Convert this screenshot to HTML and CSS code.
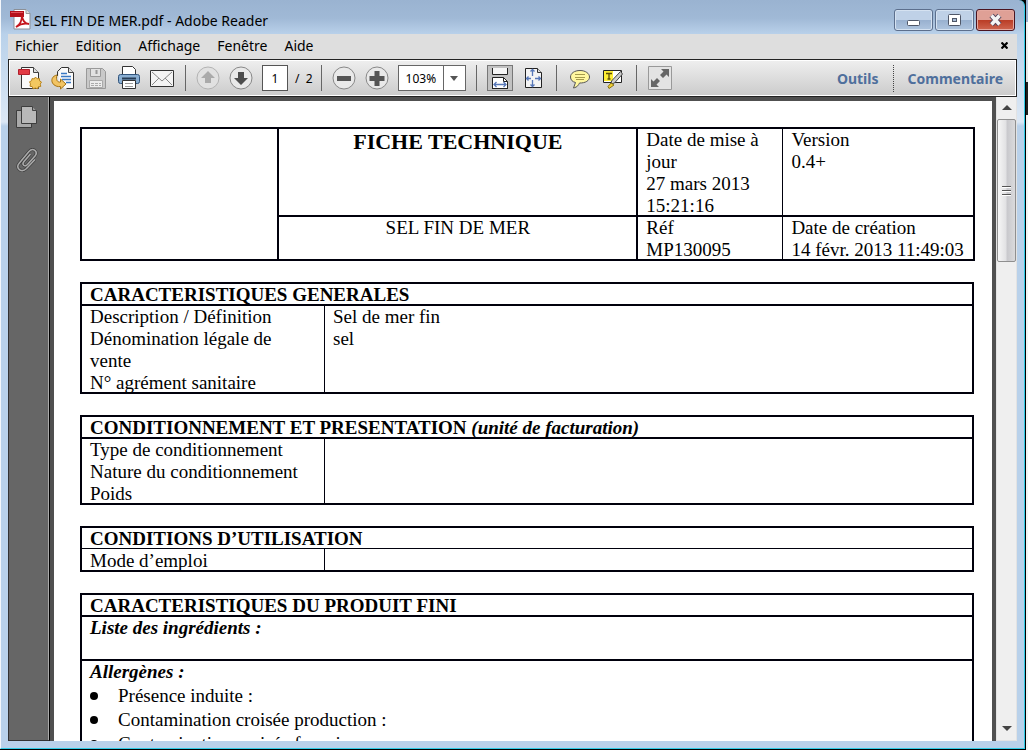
FILE: index.html
```
<!DOCTYPE html>
<html lang="fr">
<head>
<meta charset="utf-8">
<title>SEL FIN DE MER.pdf - Adobe Reader</title>
<link rel="stylesheet" href="styles.css">
</head>
<body>
<div class="window">
  <header class="titlebar">
    <svg class="app-icon" width="21" height="21" viewBox="0 0 21 21"><path d="M4 .5h12l4 4v15.500H4z" fill="#fff" stroke="#8b8f96"/><path d="M16 .5v4h4" fill="#ddd" stroke="#999"/><path d="M0 2h14v6H0z" fill="#b5121b"/><path d="M1 3h12v1H1z" fill="#e0525a"/><path d="M6 18c4-2 6-7 6-12 0 5 3 9 7 9-4-1-9 0-13 3z" fill="none" stroke="#c5161d" stroke-width="1.800"/></svg>
    <h1 class="title">SEL FIN DE MER.pdf - Adobe Reader</h1>
    <div class="window-buttons">
      <button class="win-btn" aria-label="Réduire"><svg width="37" height="20" viewBox="0 0 37 20"><rect x="12.500" y="10.500" width="12" height="5" rx="1" fill="#fff" stroke="#4f5768"/></svg></button>
      <button class="win-btn" aria-label="Agrandir"><svg width="37" height="20" viewBox="0 0 37 20"><rect x="12.500" y="4.500" width="12" height="11" rx="1" fill="#fff" stroke="#4f5768"/><rect x="16.500" y="8.500" width="4" height="3" fill="#a9bdd6" stroke="#4f5768"/></svg></button>
      <button class="win-btn close" aria-label="Fermer"><svg width="37" height="20" viewBox="0 0 37 20"><path d="M14.500 5.500l8 9m0-9l-8 9" stroke="#53435a" stroke-width="5.500"/><path d="M14.500 5.500l8 9m0-9l-8 9" stroke="#f4f4f4" stroke-width="3.400"/></svg></button>
    </div>
  </header>

  <nav class="menubar">
    <button>Fichier</button><button>Edition</button><button>Affichage</button><button>Fenêtre</button><button>Aide</button>
    <button class="doc-close" aria-label="Fermer le document"><svg width="7" height="7" viewBox="0 0 7 7"><path d="M.5.5l6 6m0-6l-6 6" stroke="#000" stroke-width="2.200"/></svg></button>
  </nav>

  <div class="toolbar">
    <div class="group files">
      <button class="tool" aria-label="Créer"><svg width="24" height="24" viewBox="0 0 24 24"><path d="M3.500 1.500h12l5 5v16h-17z" fill="#fafafa" stroke="#333"/><path d="M15.500 1.500v5h5" fill="#ddd" stroke="#444"/><path d="M0.500 3.500h11v5h-11z" fill="#e23a44" stroke="#b0202c"/><path d="M17.500 11l1.500 1.800 2.400-.3.200 2.400 1.900 1.200-1.300 2 .6 2.300-2.400.4-1 2-2.100-.8-2.200.8-.8-2.100-2.300-.5.500-2.300-1-2.100 2.100-1.100.4-2.100 2.200.3z" fill="#f3c860" stroke="#b98520"/></svg></button>
      <button class="tool" aria-label="Ouvrir"><svg width="24" height="24" viewBox="0 0 24 24"><path d="M7.500 15V6.500l4-5h6l5 5v16h-9" fill="#fafafa"/><path d="M6.500 10V5.500l4-4h7l5 5v16h-7" fill="none" stroke="#333"/><path d="M17.500 1.500v5h5" fill="#ddd" stroke="#444"/><path d="M10 7.500h6M10 10.500h10M11 13.500h9M15 16.500h5" stroke="#3a79c4" stroke-width="1.400"/><path d="M6 9C1 10 0 14 1.500 17s5.500 4 8 3.500v2.500l5.500-5-5.500-5v3c-3 .5-5-2-3.500-7z" fill="#f2c464" stroke="#a67516"/></svg></button>
      <button class="tool" aria-label="Enregistrer" disabled><svg width="24" height="24" viewBox="0 0 24 24"><path d="M2.500 2.500h16l3 3v17h-19z" fill="#c9c9c9" stroke="#999"/><path d="M6.500 2.500h10v8h-10z" fill="#e2e2e2" stroke="#999"/><path d="M12.500 4v4" stroke="#999" stroke-width="2"/><path d="M5.500 14.500h13v7h-13z" fill="#ececec" stroke="#aaa"/><path d="M7 17.500h10M7 19.500h10" stroke="#aaa" stroke-dasharray="3 1"/></svg></button>
      <button class="tool" aria-label="Imprimer"><svg width="24" height="24" viewBox="0 0 24 24"><path d="M5.500 10V.5h10l3 3V10" fill="#fff" stroke="#333"/><rect x="1.500" y="8.500" width="21" height="9" rx="2" fill="#89aed2" stroke="#31547c"/><path d="M5 12.500h14" stroke="#263c55" stroke-width="2"/><path d="M5.500 14.500h13v8h-13z" fill="#fff" stroke="#333"/><path d="M8 17.500h8M8 20.500h8" stroke="#999"/></svg></button>
      <button class="tool" aria-label="Courrier"><svg width="25" height="24" viewBox="0 0 25 24"><path d="M.5 4.500h23v16H.5z" fill="#f4f4f4" stroke="#333"/><path d="M2 6l10 9L22 6M2 19l7-7m6 0l7 7" fill="none" stroke="#888"/></svg></button>
    </div>
    <div class="group pages">
      <button class="tool" aria-label="Page précédente" disabled><svg width="24" height="24" viewBox="0 0 24 24"><circle cx="12" cy="12" r="11" fill="#e1e1e1" stroke="#b3b3b3"/><path d="M12 5l7 7h-4v5H9v-5H5z" fill="#aaa"/></svg></button>
      <button class="tool" aria-label="Page suivante"><svg width="24" height="24" viewBox="0 0 24 24"><circle cx="12" cy="12" r="11" fill="#e9e9e9" stroke="#888"/><path d="M12 19l7-7h-4V6H9v6H5z" fill="#4d4d4d"/></svg></button>
      <input class="page-no" aria-label="Page" value="1"><span class="page-total">/&nbsp; 2</span>
    </div>
    <div class="group zooms">
      <button class="tool" aria-label="Zoom arrière"><svg width="24" height="24" viewBox="0 0 24 24"><circle cx="12" cy="12" r="11" fill="#e9e9e9" stroke="#888"/><path d="M5 10h14v5H5z" fill="#555"/></svg></button>
      <button class="tool" aria-label="Zoom avant"><svg width="24" height="24" viewBox="0 0 24 24"><circle cx="12" cy="12" r="11" fill="#e9e9e9" stroke="#888"/><path d="M4.500 10h5V5h5v5h5v5h-5v5h-5v-5h-5z" fill="#555"/></svg></button>
      <div class="zoom-box"><select aria-label="Zoom"><option>103%</option></select><svg class="zoom-arrow" width="22" height="24" viewBox="0 0 22 24"><path d="M.5 0v24" stroke="#666"/><path d="M7 10h8l-4 5z" fill="#555"/></svg></div>
    </div>
    <div class="group views">
      <button class="tool pressed" aria-label="Défilement"><svg width="24" height="24" viewBox="0 0 24 24"><path d="M4.500 2v6.500h15V2" fill="#f5f5f5" stroke="#222"/><path d="M4.500 23V11.500h11l4 4V23" fill="#fff" stroke="#222"/><path d="M15.500 11.500v4h4" fill="none" stroke="#222"/><path d="M6 18.500h12M8.500 16L6 18.500 8.500 21m7-5l2.500 2.500-2.500 2.500" fill="none" stroke="#5878b8" stroke-width="1.300"/><path d="M4 22.500h16" stroke="#222"/></svg></button>
      <button class="tool" aria-label="Une page"><svg width="24" height="24" viewBox="0 0 24 24"><path d="M3.500 2.500h12l4 4v15h-16z" fill="#f4f4f4" stroke="#222"/><path d="M15.500 2.500v4h4" fill="#ddd" stroke="#333"/><path d="M10.500 3.500V10m0 4v7M4.500 12.500H9m4 0h5.500M8.500 5.500l2-2 2 2m-4 13l2 2 2-2M6.500 10.500l-2 2 2 2m10-4l2 2-2 2" fill="none" stroke="#5878b8" stroke-width="1.300"/></svg></button>
    </div>
    <div class="group notes">
      <button class="tool" aria-label="Note"><svg width="24" height="24" viewBox="0 0 24 24"><path d="M12 4.500c-5.500 0-9.500 2.800-9.500 6.500 0 3 2 4.800 5 5.500l-2 5.500c4-1 5-3 6-5 6 .2 10-2.500 10-6s-4-6.500-9.500-6.500z" fill="#fff7a0" stroke="#555"/><path d="M7 8.500h10M7 11.500h10M8 13.500h8" stroke="#a59a4c"/></svg></button>
      <button class="tool" aria-label="Surligner"><svg width="24" height="24" viewBox="0 0 24 24"><path d="M2.500 4.500h18v12h-18z" fill="#fff" stroke="#222"/><path d="M3 5h9v10H3z" fill="#ffee35"/><path d="M5 7.500h6M8 7v6M6.500 13h3" stroke="#5b4d08" stroke-width="1.300"/><path d="M19.500 5.500l2 2.500-8 9-3.500 1 .5-3z" fill="#ccc" stroke="#444"/><path d="M10 17l3 2-5 3.500-1-2z" fill="#f1cf35" stroke="#887316"/></svg></button>
    </div>
    <button class="tool screen" aria-label="Plein écran"><svg width="24" height="24" viewBox="0 0 24 24"><path d="M.5.5h23v23H.5z" fill="#e3e3e3" stroke="#999"/><path d="M13 3h8v8l-2.500-2.500-3.500 3.500-3-3L15.500 5.500zM3 13l2.500 2.500L9 12l3 3-3.500 3.500L11 21H3z" fill="#666"/></svg></button>
    <div class="panels"><button>Outils</button><button>Commentaire</button></div>
  </div>

  <div class="workspace">
    <aside class="sidebar">
      <button class="tool" aria-label="Vignettes"><svg width="22" height="24" viewBox="0 0 22 24"><path d="M.5 5.500h15v17H.5z" fill="#a9a9a9" stroke="#3d3d3d"/><path d="M5.500 1.500h11l4 4v13h-15z" fill="#b9b9b9" stroke="#3d3d3d"/><path d="M16.500 1.500v4h4" fill="#999" stroke="#444"/></svg></button>
      <button class="tool" aria-label="Pièces jointes"><svg width="22" height="24" viewBox="0 0 22 24"><g fill="none" stroke="#3d3d3d" stroke-width="3"><path d="M19 11.500l-8.500 9c-5 5-11.500-.5-7.500-5L13 3.500c4-4.500 9.500 0 6 4.500l-7.500 8.500c-3 3-6 0-3.500-3L14.500 6"/></g><g fill="none" stroke="#aaa" stroke-width="1.600"><path d="M19 11.500l-8.500 9c-5 5-11.500-.5-7.500-5L13 3.500c4-4.500 9.500 0 6 4.500l-7.500 8.500c-3 3-6 0-3.500-3L14.500 6"/></g></svg></button>
    </aside>
    <main class="viewer">
      <article class="page">
        <table class="sheet head">
          <colgroup><col class="c-logo"><col class="c-title"><col class="c-date"><col></colgroup>
          <tr><td rowspan="2"></td><td class="mid"><div class="doc-title">FICHE TECHNIQUE</div></td><td class="thin-right"><div>Date de mise à<br>jour<br>27 mars 2013<br>15:21:16</div></td><td><div>Version<br>0.4+</div></td></tr>
          <tr><td class="mid"><div>SEL FIN DE MER</div></td><td class="thin-right"><div>Réf<br>MP130095</div></td><td><div>Date de création<br>14 févr. 2013 11:49:03</div></td></tr>
        </table>

        <table class="sheet">
          <colgroup><col class="c-label"><col></colgroup>
          <tr><th colspan="2"><div>CARACTERISTIQUES GENERALES</div></th></tr>
          <tr><td class="thin-right"><div>Description / Définition<br>Dénomination légale de<br>vente<br>N° agrément sanitaire</div></td><td><div>Sel de mer fin<br>sel</div></td></tr>
        </table>

        <table class="sheet">
          <colgroup><col class="c-label"><col></colgroup>
          <tr><th colspan="2"><div>CONDITIONNEMENT ET PRESENTATION <em>(unité de facturation)</em></div></th></tr>
          <tr><td class="thin-right"><div>Type de conditionnement<br>Nature du conditionnement<br>Poids</div></td><td></td></tr>
        </table>

        <table class="sheet">
          <colgroup><col class="c-label"><col></colgroup>
          <tr><th colspan="2" class="thin-bottom"><div>CONDITIONS D’UTILISATION</div></th></tr>
          <tr class="thin-top"><td class="thin-right roomy"><div>Mode d’emploi</div></td><td></td></tr>
        </table>

        <table class="sheet">
          <tr><th><div>CARACTERISTIQUES DU PRODUIT FINI</div></th></tr>
          <tr><th><div><em>Liste des ingrédients :</em><br>&nbsp;</div></th></tr>
          <tr><td><div><strong><em>Allergènes :</em></strong>
            <ul class="bullets"><li>Présence induite :</li><li>Contamination croisée production :</li><li>Contamination croisée fournisseur :</li></ul></div></td></tr>
        </table>
      </article>
    </main>
    <div class="scrollbar">
      <button aria-label="Défiler vers le haut"><svg width="10" height="6" viewBox="0 0 10 6"><path d="M5 0l5 5H0z" fill="#444"/></svg></button>
      <div class="thumb"><svg width="10" height="12" viewBox="0 0 10 12"><path d="M0 1.500h9M0 5.500h9M0 9.500h9" stroke="#555"/><path d="M0 2.500h9M0 6.500h9M0 10.500h9" stroke="#fff"/></svg></div>
      <button aria-label="Défiler vers le bas"><svg width="10" height="6" viewBox="0 0 10 6"><path d="M0 0h10L5 5z" fill="#444"/></svg></button>
    </div>
  </div>
</div>
<div class="desktop-edge"></div>
</body>
</html>
```
FILE: styles.css
```
* { box-sizing: border-box; }
body {
  margin: 0;
  height: 100vh;
  display: flex;
  overflow: hidden;
  font-family: "Noto Sans", "Open Sans", sans-serif;
  background: #000;
}
button {
  font: inherit;
  color: inherit;
  background: none;
  border: 0;
  padding: 0;
}
svg { display: block; }

.window {
  flex: 1;
  min-width: 0;
  display: flex;
  flex-direction: column;
  margin: 0 1px 1px 0;
  padding: 0 7px 7px;
  border: solid #30cbe6;
  border-width: 0 1px 1px 0;
  border-left: 1px solid #f4f7fb;
  border-top-right-radius: 6px;
  background: linear-gradient(#9ab3d1 0, #a0b9d6 18px, #b9d1ea 34px, #dce8f5 122px, #b9d1ea 126px);
}
.desktop-edge {
  width: 2px;
  background: linear-gradient(#9db2d0 22px, #f4f4f4 22px, #e4e4e4 82px, #1d1d1d 82px, #1d1d1d 115px, #f4f4f4 115px);
}

/* Title bar */
.titlebar {
  height: 34px;
  display: flex;
  align-items: flex-start;
  gap: 3px;
  padding: 9px 2px 0 2px;
}
.app-icon { flex: none; }
.title {
  flex: 1;
  margin: 0;
  font-size: 14px;
  font-weight: 400;
  line-height: 24px;
}
.window-buttons { display: flex; gap: 2px; }
.win-btn {
  width: 39px;
  height: 22px;
  border: 1px solid #5c6f8d;
  border-radius: 3px;
  box-shadow: inset 0 0 0 1px #d5e2f1;
  background: linear-gradient(#bfd1e7 48%, #98b0cf 50%, #afc5df);
}
.win-btn.close {
  border-color: #4b1420;
  box-shadow: inset 0 0 0 1px #e5a9a0;
  background: linear-gradient(#dfa096 48%, #b93c25 50%, #cf6650);
}

/* Menu bar */
.menubar {
  height: 25px;
  display: flex;
  align-items: center;
  gap: 17px;
  padding: 0 9px 2px 7px;
  font-size: 14px;
  background: #dedede;
}
.doc-close { margin-left: auto; }

/* Toolbar */
.toolbar {
  height: 38px;
  display: flex;
  align-items: center;
  padding: 0 13px 0 9px;
  border: 1px solid #222;
  box-shadow: inset 0 0 0 1px #fff;
  background: linear-gradient(#efefef, #cbcbcb);
}
.group {
  flex: none;
  display: flex;
  align-items: center;
  gap: 9px;
  border-right: 1px solid #666;
  height: 26px;
}
.tool { flex: none; }
.files { padding-right: 10px; }
.pages { padding: 0 8px 0 10px; }
.zooms { padding: 0 10px; }
.views { padding: 0 10px; }
.notes { padding: 0 11px; }
.screen { margin-left: 11px; }
.page-no {
  width: 26px;
  height: 26px;
  padding: 0;
  border: 1px solid #555;
  text-align: center;
  font: 12px "Noto Sans", sans-serif;
}
.page-total { margin-left: -2px; font-size: 12px; white-space: nowrap; }
.zoom-box {
  display: grid;
  width: 68px;
  height: 26px;
  border: 1px solid #666;
  background: #fff;
}
.zoom-box select {
  grid-area: 1 / 1;
  appearance: none;
  border: 0;
  padding: 0 7px;
  background: none;
  color: #000;
  font: 12px "Noto Sans", sans-serif;
}
.zoom-arrow { grid-area: 1 / 1; justify-self: end; pointer-events: none; }
.pressed {
  width: 26px;
  height: 26px;
  border: 1px solid #777;
  background: #c2c2c2;
}
.panels {
  flex: 1;
  display: flex;
  justify-content: flex-end;
  color: #4f6f9c;
  font-size: 14px;
  font-weight: 700;
}
.panels button { height: 27px; padding-left: 14px; font-weight: 700; }
.panels button + button { margin-left: 14px; border-left: 1px dotted #444; }

/* Document area */
.workspace { flex: 1; min-height: 0; display: flex; background: #505050; }
.sidebar {
  width: 42px;
  display: flex;
  flex-direction: column;
  align-items: center;
  gap: 19px;
  padding: 8px 4px 0 0;
  border: solid #333;
  border-width: 0 1px 1px;
  border-right-color: #000;
  box-shadow: inset -1px 0 #aaa;
  background: #666;
}
.viewer { flex: 1; min-width: 0; overflow: hidden; padding: 4px 4px 0; }
.page {
  min-height: 100%;
  padding: 26px 18px 0 26px;
  background: #fff;
  color: #000;
  font: 19px/22px "Liberation Serif", serif;
}
.sheet {
  width: 100%;
  margin-bottom: 21px;
  table-layout: fixed;
  border-collapse: collapse;
  border: 2px solid #00000c;
}
.head { width: calc(100% + 1px); }
.c-logo { width: 22.1%; }
.c-title { width: 40.2%; }
.c-date { width: 16.3%; }
.c-label { width: 27.3%; }
.sheet td, .sheet th {
  padding: 0 0 0 8px;
  border: 2px solid #00000c;
  text-align: left;
  vertical-align: top;
}
.sheet td > div, .sheet th > div { margin-bottom: -2px; }
.sheet .mid { padding: 0; text-align: center; }
.sheet .thin-right { border-right-width: 1px; }
.sheet .thin-right + td { border-left-width: 1px; }
.sheet .thin-bottom { border-bottom-width: 1px; }
.sheet .thin-top td { border-top-width: 1px; }
.sheet .roomy { padding-top: 1px; }
.doc-title { font-size: 22px; font-weight: 700; line-height: 26px; }
.bullets {
  margin: 1px 0 0;
  padding: 0;
  line-height: 24px;
  list-style: none;
}
.bullets li { display: flex; align-items: center; gap: 20px; }
.bullets li::before {
  content: "";
  width: 8px;
  height: 8px;
  border-radius: 50%;
  background: #000;
}

/* Scroll bar */
.scrollbar {
  width: 21px;
  display: flex;
  flex-direction: column;
  border: 1px solid #e3e3e3;
  border-width: 0 1px 1px;
  background: #efefef;
}
.scrollbar button {
  height: 22px;
  display: flex;
  align-items: center;
  justify-content: center;
}
.scrollbar button:last-child { margin-top: auto; }
.thumb {
  height: 143px;
  display: flex;
  align-items: center;
  justify-content: center;
  border: 1px solid #8f8f8f;
  border-radius: 2px;
  background: linear-gradient(90deg, #f6f6f6, #e2e2e4 45%, #c9c9cd 55%, #dadadc);
}
```
